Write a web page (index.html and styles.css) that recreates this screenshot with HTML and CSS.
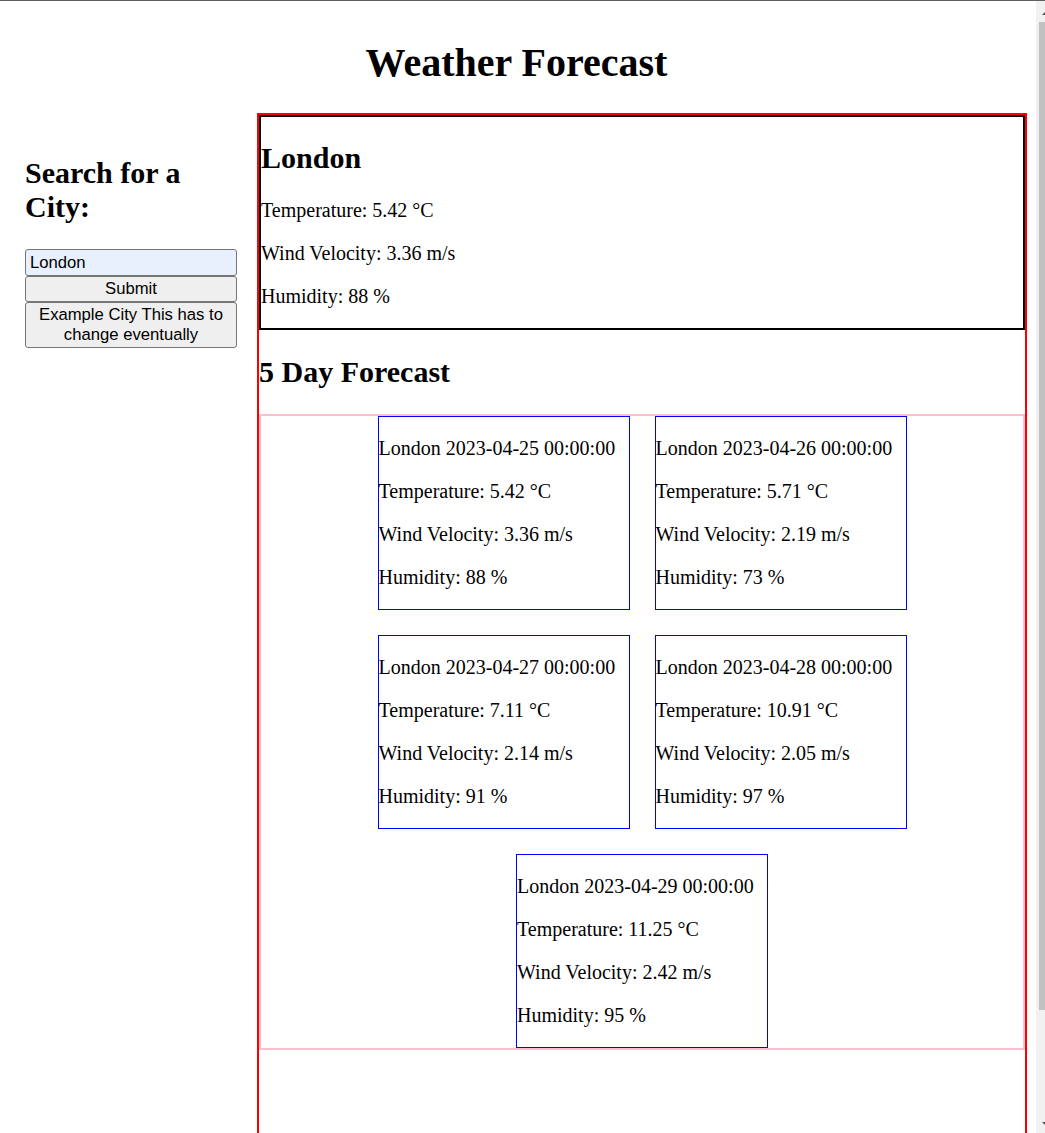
FILE: index.html
```html
<!DOCTYPE html>
<html lang="en">
<head>
<meta charset="utf-8">
<title>Weather Forecast</title>
<link rel="stylesheet" href="styles.css">
</head>
<body>
<h1 class="title">Weather Forecast</h1>
<div class="layout">
  <aside class="search">
    <h2 class="search-title">Search for a City:</h2>
    <input class="city-input" type="text" value="London">
    <button class="btn">Submit</button>
    <button class="btn">Example City This has to change eventually</button>
  </aside>
  <main class="results">
    <section class="current">
      <h2 class="city-name">London</h2>
      <p class="line">Temperature: 5.42 °C</p>
      <p class="line">Wind Velocity: 3.36 m/s</p>
      <p class="line">Humidity: 88 %</p>
    </section>
    <h2 class="forecast-title">5 Day Forecast</h2>
    <div class="forecast">
      <div class="card">
        <p class="line">London 2023-04-25 00:00:00</p>
        <p class="line">Temperature: 5.42 °C</p>
        <p class="line">Wind Velocity: 3.36 m/s</p>
        <p class="line">Humidity: 88 %</p>
      </div>
      <div class="card">
        <p class="line">London 2023-04-26 00:00:00</p>
        <p class="line">Temperature: 5.71 °C</p>
        <p class="line">Wind Velocity: 2.19 m/s</p>
        <p class="line">Humidity: 73 %</p>
      </div>
      <div class="card">
        <p class="line">London 2023-04-27 00:00:00</p>
        <p class="line">Temperature: 7.11 °C</p>
        <p class="line">Wind Velocity: 2.14 m/s</p>
        <p class="line">Humidity: 91 %</p>
      </div>
      <div class="card">
        <p class="line">London 2023-04-28 00:00:00</p>
        <p class="line">Temperature: 10.91 °C</p>
        <p class="line">Wind Velocity: 2.05 m/s</p>
        <p class="line">Humidity: 97 %</p>
      </div>
      <div class="card">
        <p class="line">London 2023-04-29 00:00:00</p>
        <p class="line">Temperature: 11.25 °C</p>
        <p class="line">Wind Velocity: 2.42 m/s</p>
        <p class="line">Humidity: 95 %</p>
      </div>
    </div>
  </main>
</div>
<div class="scrollbar" aria-hidden="true">
  <span class="arrow arrow-up"></span>
  <span class="thumb"></span>
  <span class="arrow arrow-down"></span>
</div>
</body>
</html>
```

FILE: styles.css
```css
html {
  border-top: 1px solid #5f5f5f;
}
body {
  margin: 10px 18px 10px 10px;
  font-family: "Liberation Serif", "Times New Roman", serif;
  font-size: 20px;
  color: #000;
  background: #fff;
}
.title {
  font-size: 40px;
  font-weight: bold;
  text-align: center;
  margin: 28px 4px 27px 0;
}
.layout {
  display: flex;
  align-items: flex-start;
}
.search {
  flex: 0 0 212px;
  padding: 19px 20px 0 15px;
}
.search-title {
  font-size: 30px;
  margin: 24px 0 25px;
}
.city-input {
  display: block;
  box-sizing: border-box;
  width: 100%;
  height: 27px;
  margin: 0;
  padding: 0 4px;
  border: 1px solid #767676;
  border-radius: 3px;
  background: #e8f0fe;
  font-family: "Liberation Sans", Arial, sans-serif;
  font-size: 16.67px;
  color: #000;
}
.btn {
  display: block;
  box-sizing: border-box;
  width: 100%;
  margin: 0;
  padding: 2px 7px;
  border: 1px solid #767676;
  border-radius: 3px;
  background: #efefef;
  font-family: "Liberation Sans", Arial, sans-serif;
  font-size: 16.67px;
  line-height: 20px;
  color: #000;
  text-align: center;
}
.results {
  flex: 1 1 auto;
  min-width: 0;
  min-height: 1060px;
  border: 2px solid #ff0000;
}
.current {
  border: 2px solid #000;
}
.city-name {
  font-size: 30px;
  margin: 24px 0;
}
.line {
  margin: 20px 0;
}
.forecast-title {
  font-size: 30px;
  margin: 25px 0;
}
.forecast {
  display: flex;
  flex-wrap: wrap;
  justify-content: center;
  gap: 25px;
  border: 2px solid #ffc0cb;
}
.card {
  width: 250px;
  border: 1px solid #0000ff;
}
.scrollbar {
  position: fixed;
  top: 1px;
  right: 0;
  bottom: 0;
  width: 9px;
  background: #f1f1f1;
}
.thumb {
  position: absolute;
  top: 21px;
  bottom: 123px;
  left: 3px;
  right: 0;
  background: #c1c1c1;
}
.arrow {
  position: absolute;
  right: 0;
  width: 0;
  height: 0;
  border-left: 3px solid transparent;
}
.arrow-up {
  top: 11px;
  border-bottom: 3px solid #505050;
}
.arrow-down {
  bottom: 8px;
  border-top: 3px solid #505050;
}
```
